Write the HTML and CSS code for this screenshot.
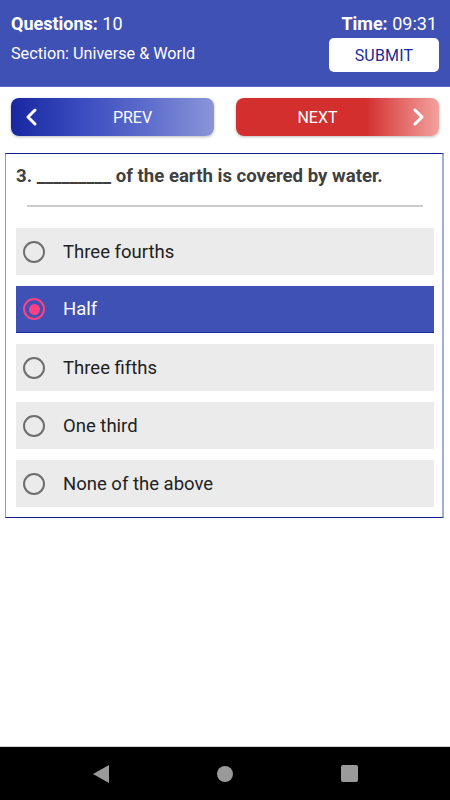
FILE: index.html
```html
<!DOCTYPE html>
<html lang="en">
<head>
<meta charset="utf-8">
<title>Quiz</title>
<link rel="stylesheet" href="styles.css">
</head>
<body>
<div class="screen">
  <header class="topbar">
    <div class="info">
      <div class="count"><b>Questions:</b> 10</div>
      <div class="section">Section: Universe &amp; World</div>
    </div>
    <div class="side">
      <div class="time"><b>Time:</b> 09:31</div>
      <button class="submit">SUBMIT</button>
    </div>
  </header>

  <main class="content">
    <div class="navrow">
      <button class="navbtn prev">
        <span class="chev-box"><svg class="chev" viewBox="0 0 12 18" width="12" height="18"><polyline points="10,2 3,9 10,16" fill="none" stroke="#fff" stroke-width="3" stroke-linecap="round" stroke-linejoin="round"/></svg></span>
        <span class="label">PREV</span>
      </button>
      <button class="navbtn next">
        <span class="label">NEXT</span>
        <span class="chev-box"><svg class="chev" viewBox="0 0 12 18" width="12" height="18"><polyline points="2,2 9,9 2,16" fill="none" stroke="#fff" stroke-width="3" stroke-linecap="round" stroke-linejoin="round"/></svg></span>
      </button>
    </div>

    <section class="card">
      <p class="question">3. _________ of the earth is covered by water.</p>
      <div class="divider"></div>
      <ul class="options">
        <li class="option"><span class="radio"></span><span class="opt-text">Three fourths</span></li>
        <li class="option selected"><span class="radio"></span><span class="opt-text">Half</span></li>
        <li class="option"><span class="radio"></span><span class="opt-text">Three fifths</span></li>
        <li class="option"><span class="radio"></span><span class="opt-text">One third</span></li>
        <li class="option"><span class="radio"></span><span class="opt-text">None of the above</span></li>
      </ul>
    </section>
  </main>

  <nav class="sysbar">
    <svg class="sys-icon" viewBox="0 0 16 18" width="16" height="18"><polygon points="16,0 16,18 0,9" fill="#9a9a9a"/></svg>
    <svg class="sys-icon" viewBox="0 0 16 16" width="16" height="16"><circle cx="8" cy="8" r="8" fill="#9a9a9a"/></svg>
    <svg class="sys-icon" viewBox="0 0 17 17" width="17" height="17"><rect x="0" y="0" width="17" height="17" rx="2" fill="#9a9a9a"/></svg>
  </nav>
</div>
</body>
</html>
```

FILE: styles.css
```css
* {
  box-sizing: border-box;
}

html, body {
  margin: 0;
  padding: 0;
}

body {
  font-family: Roboto, "Liberation Sans", sans-serif;
  background: #ffffff;
}

.screen {
  width: 450px;
  height: 800px;
  display: flex;
  flex-direction: column;
}

/* ---------- header ---------- */
.topbar {
  height: 87px;
  background: #3f51b5;
  border-bottom: 1px solid #5b6bc4;
  display: flex;
  justify-content: space-between;
  align-items: flex-start;
  padding: 13px 11px 0 11px;
  color: #ffffff;
}

.info {
  display: flex;
  flex-direction: column;
}

.count, .time {
  font-size: 18px;
  line-height: 22px;
}

.count b, .time b {
  font-weight: 700;
}

.section {
  font-size: 16.2px;
  line-height: 19px;
  margin-top: 9px;
}

.side {
  display: flex;
  flex-direction: column;
  align-items: flex-end;
}

.time {
  padding-right: 2px;
}

.submit {
  margin-top: 3px;
  width: 110px;
  height: 34px;
  border: none;
  border-radius: 5px;
  background: #ffffff;
  color: #1a2a9a;
  font-family: inherit;
  font-size: 16px;
  padding: 0;
  letter-spacing: 0.2px;
}

/* ---------- prev / next ---------- */
.content {
  flex: 1;
  display: flex;
  flex-direction: column;
}

.navrow {
  display: flex;
  justify-content: space-between;
  margin: 11px 11px 0 11px;
}

.navbtn {
  width: 203px;
  height: 38px;
  border: none;
  border-radius: 8px;
  padding: 0;
  display: flex;
  align-items: center;
  color: #ffffff;
  font-family: inherit;
  font-size: 16px;
  box-shadow: 0 1px 3px rgba(0, 0, 0, 0.28);
}

.navbtn .label {
  flex: 1;
  text-align: center;
}

.chev-box {
  width: 40px;
  display: flex;
  justify-content: center;
  align-items: center;
}

.prev {
  background: linear-gradient(to right, #1827a0 0%, #3a4cbf 35%, #6170cc 70%, #8a95d8 100%);
}

.next {
  background: linear-gradient(to right, #d32f2f 0%, #d32f2f 64%, #e36b69 82%, #f3a19d 100%);
}

/* ---------- question card ---------- */
.card {
  margin: 17px 6px 0 5px;
  border-top: 1px solid #101c8c;
  border-bottom: 1px solid #101c8c;
  border-left: 1px solid #8e98d6;
  border-right: 2px solid #a3abde;
  padding: 11px 8px 10px 10px;
}

.question {
  margin: 0;
  font-size: 18.6px;
  line-height: 23px;
  font-weight: 700;
  color: #404040;
}

.divider {
  height: 2px;
  background: #cccccc;
  margin: 17px 11px 0 11px;
}

.options {
  list-style: none;
  margin: 21px 0 0 0;
  padding: 0;
  display: flex;
  flex-direction: column;
  gap: 11px;
}

.option {
  height: 47px;
  background: #ebebeb;
  display: flex;
  align-items: center;
  padding-left: 7px;
  color: #212121;
  font-size: 18.5px;
}

.radio {
  width: 22px;
  height: 22px;
  border-radius: 50%;
  border: 2px solid #6e6e6e;
  margin-right: 18px;
  flex: none;
  display: flex;
  align-items: center;
  justify-content: center;
}

.option.selected {
  background: #3f51b5;
  border-bottom: 1px solid #1a2aa6;
  color: #ffffff;
}

.option.selected .radio {
  border: 2.5px solid #ff4081;
}

.option.selected .radio::after {
  content: "";
  width: 11px;
  height: 11px;
  border-radius: 50%;
  background: #ff4081;
}

/* ---------- system nav bar ---------- */
.sysbar {
  height: 54px;
  background: #000000;
  border-top: 1px solid #d4d4d4;
  display: flex;
  justify-content: center;
  align-items: center;
  gap: 108px;
}
```
